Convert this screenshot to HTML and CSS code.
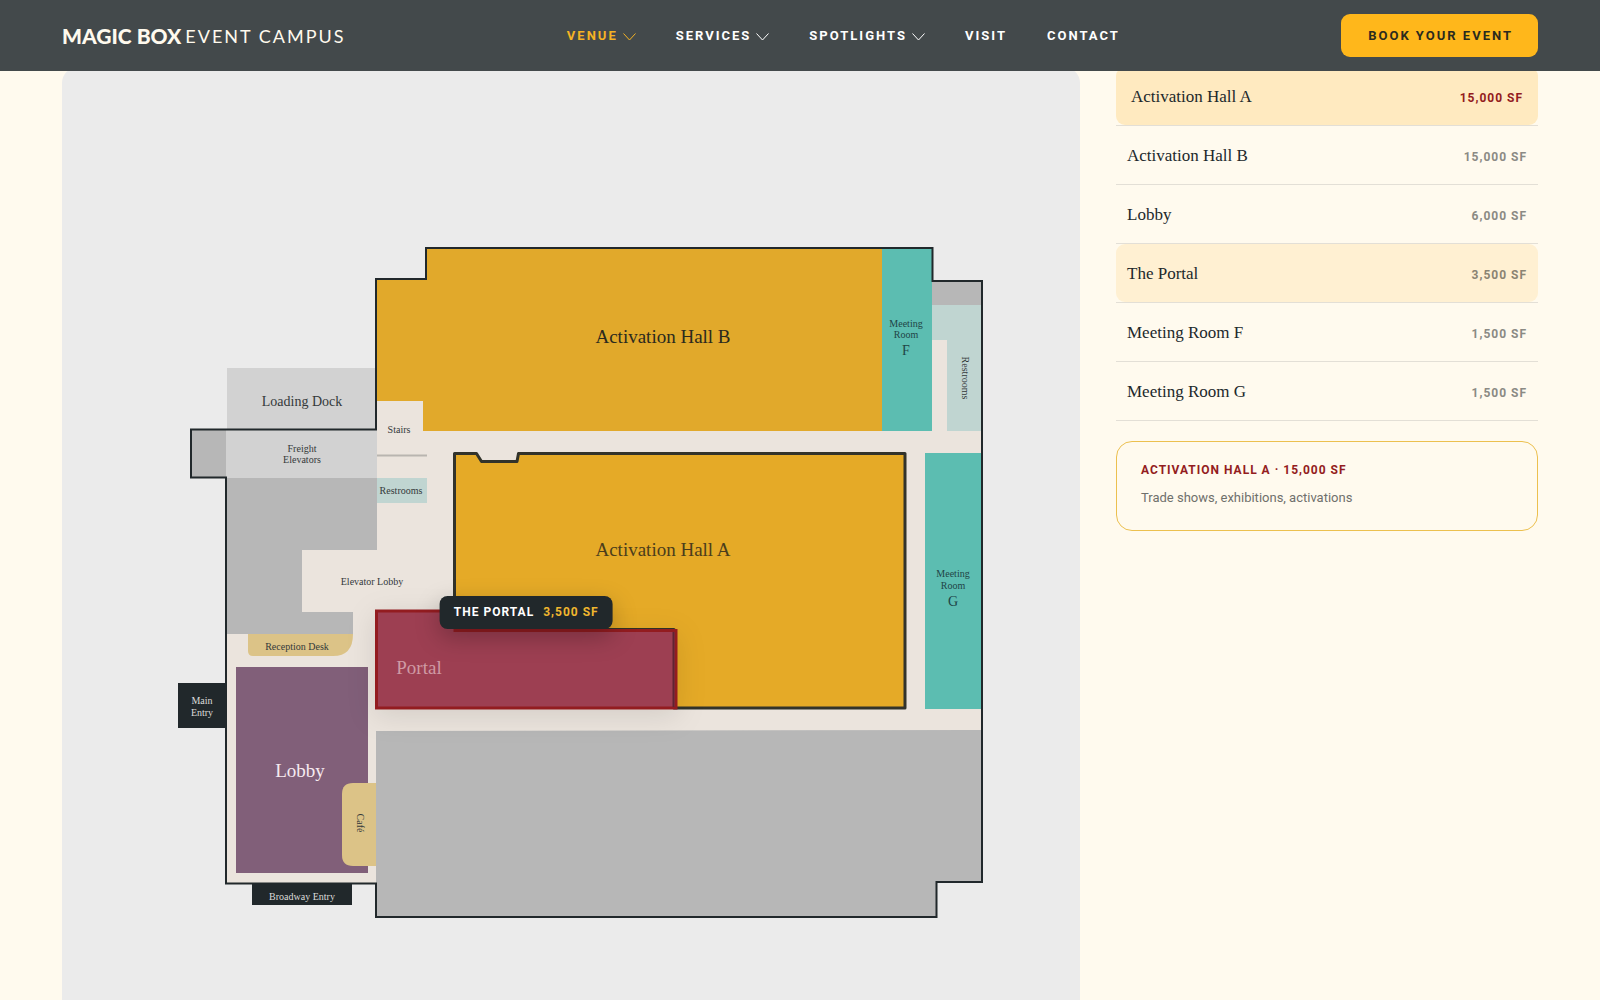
FILE: index.html
```html
<!DOCTYPE html>
<html lang="en">
<head>
<meta charset="utf-8">
<meta name="viewport" content="width=device-width, initial-scale=1">
<title>Magic Box Event Campus – Venue</title>
<link rel="stylesheet" href="styles.css">
</head>
<body>
<header class="site-header">
  <a class="logo" href="#"><span class="logo-bold">MAGIC BOX</span><span class="logo-light">EVENT CAMPUS</span></a>
  <nav class="nav" aria-label="Main">
    <a class="nav-link is-current" href="#">VENUE<svg class="chevron" viewBox="0 0 13 8" aria-hidden="true"><path d="M.5.5l6 6.5 6-6.5"/></svg></a>
    <a class="nav-link" href="#">SERVICES<svg class="chevron" viewBox="0 0 13 8" aria-hidden="true"><path d="M.5.5l6 6.5 6-6.5"/></svg></a>
    <a class="nav-link" href="#">SPOTLIGHTS<svg class="chevron" viewBox="0 0 13 8" aria-hidden="true"><path d="M.5.5l6 6.5 6-6.5"/></svg></a>
    <a class="nav-link" href="#">VISIT</a>
    <a class="nav-link" href="#">CONTACT</a>
  </nav>
  <button class="book" type="button">BOOK YOUR EVENT</button>
</header>

<main class="venue">
  <section class="plan" aria-label="Floor plan">
    <svg class="plan-map" viewBox="62 67 1018 933" role="img" aria-label="Ground floor">
      <path class="dock" d="M227 368H376V430H227z"/>
      <path class="floor" d="M426 248H932V281H982V882H936V917H376V883H226V477H191V430H376V279H426z"/>
      <path class="closed" d="M191 430H227V477H191z"/>
      <path class="dock" d="M226 430H377V478H226z"/>
      <path class="closed" d="M226 478H377V550H302V612H353V634H226z"/>
      <path class="closed" d="M376 731L982 730V882H936V917H376z"/>
      <path class="closed" d="M932 281H982V305H932z"/>
      <path class="restroom" d="M932 305H982V431H947V340H932z"/>
      <path class="restroom" d="M377 478H427V503H377z"/>
      <path class="divider" d="M377 455.5H427"/>
      <path class="hall-b" d="M376 279H426V248H882V431H423V401H376z"/>
      <path class="meeting" d="M882 248H932V431H882z"/>
      <path class="meeting" d="M925 453H982V709H925z"/>
      <path class="lobby" d="M236 667H368V873H236z"/>
      <path class="desk" d="M248 634H353Q353 656 333 656H253Q248 656 248 651z"/>
      <path class="desk" d="M376 783V866H353Q342 866 342 855V794Q342 783 353 783z"/>
      <path class="outline" d="M426 248H932.5V281H982V882H936.5V917H376V883.5H226V477.5H191V429.5H376V279H426z"/>
      <path class="entry" d="M178 683H226V728H178z"/>
      <path class="entry" d="M252 883H352V905H252z"/>
      <path class="hall-a" d="M454.5 453.5H476.5L481.5 461.5H517L518.5 453.5H905V708H674V629.5H454.5z"/>
      <path class="portal" d="M376.5 611H455V630.5H676V708H376.5z"/>
      <path class="portal-wall" d="M673.5 632V707"/>

      <text class="label label-room" x="663" y="343">Activation Hall B</text>
      <text class="label label-room label-active" x="663" y="556">Activation Hall A</text>
      <text class="label label-room label-portal" x="419" y="674">Portal</text>
      <text class="label label-room label-lobby" x="300" y="777">Lobby</text>
      <text class="label label-medium" x="302" y="406">Loading Dock</text>
      <text class="label" x="302" y="452">Freight</text>
      <text class="label" x="302" y="463">Elevators</text>
      <text class="label" x="399" y="433">Stairs</text>
      <text class="label" x="401" y="494">Restrooms</text>
      <text class="label" x="372" y="585">Elevator Lobby</text>
      <text class="label" x="297" y="650">Reception Desk</text>
      <text class="label label-entry" x="202" y="704">Main</text>
      <text class="label label-entry" x="202" y="716">Entry</text>
      <text class="label label-entry" x="302" y="900">Broadway Entry</text>
      <text class="label label-meeting" x="906" y="327">Meeting</text>
      <text class="label label-meeting" x="906" y="338">Room</text>
      <text class="label label-meeting label-medium" x="906" y="355">F</text>
      <text class="label label-meeting" x="953" y="577">Meeting</text>
      <text class="label label-meeting" x="953" y="589">Room</text>
      <text class="label label-meeting label-medium" x="953" y="606">G</text>
      <text class="label" transform="translate(962 378) rotate(90)">Restrooms</text>
      <text class="label" transform="translate(357 823) rotate(90)">Café</text>
    </svg>
    <div class="tooltip" role="tooltip"><span>THE PORTAL</span><span class="tooltip-size">3,500 SF</span></div>
  </section>

  <aside class="spaces">
    <ul class="space-list">
      <li><button class="space is-active" type="button"><span class="space-name">Activation Hall A</span><span class="space-size">15,000 SF</span></button></li>
      <li><button class="space" type="button"><span class="space-name">Activation Hall B</span><span class="space-size">15,000 SF</span></button></li>
      <li><button class="space" type="button"><span class="space-name">Lobby</span><span class="space-size">6,000 SF</span></button></li>
      <li><button class="space is-hovered" type="button"><span class="space-name">The Portal</span><span class="space-size">3,500 SF</span></button></li>
      <li><button class="space" type="button"><span class="space-name">Meeting Room F</span><span class="space-size">1,500 SF</span></button></li>
      <li><button class="space" type="button"><span class="space-name">Meeting Room G</span><span class="space-size">1,500 SF</span></button></li>
    </ul>
    <div class="detail">
      <h2 class="detail-title">ACTIVATION HALL A · 15,000 SF</h2>
      <p class="detail-text">Trade shows, exhibitions, activations</p>
    </div>
  </aside>
</main>
</body>
</html>
```

FILE: styles.css
```css
:root {
  --ink: #21282b;
  --cream: #fffaee;
  --gold: #ffb71b;
  --red: #931c20;
  --sans: Roboto, "Liberation Sans", sans-serif;
  --serif: "Liberation Serif", serif;
}

* { box-sizing: border-box; }

body {
  margin: 0;
  background: var(--cream);
  color: var(--ink);
  font-family: var(--sans);
}

button {
  border: 0;
  font: inherit;
  color: inherit;
  cursor: pointer;
}

/* Header */
.site-header {
  position: fixed;
  inset: 0 0 auto;
  z-index: 10;
  display: flex;
  align-items: center;
  justify-content: space-between;
  height: 71px;
  padding: 0 62px;
  background: #43494b;
}

.logo {
  display: flex;
  align-items: center;
  gap: 4px;
  color: var(--cream);
  font-family: Lato, sans-serif;
  text-decoration: none;
  white-space: nowrap;
}

.logo-bold { font-size: 21px; font-weight: 900; }
.logo-light { font-size: 18px; letter-spacing: 2px; }

.nav { display: flex; gap: 40px; }

.nav-link {
  display: flex;
  align-items: center;
  gap: 5px;
  color: #fff;
  font-size: 13px;
  font-weight: 700;
  letter-spacing: 2px;
  text-decoration: none;
}

.nav-link.is-current { color: #f5b324; }

.chevron {
  width: 13px;
  height: 8px;
  margin-top: 2px;
  fill: none;
  stroke: currentColor;
}

.book {
  height: 43px;
  padding: 0 25px 0 27px;
  border-radius: 9px;
  background: var(--gold);
  color: #2b2a1e;
  font-size: 13px;
  font-weight: 700;
  letter-spacing: 2px;
}

/* Page body */
.venue {
  display: grid;
  grid-template-columns: minmax(0, 1fr) 422px;
  gap: 36px;
  padding: 67px 62px 0;
}

/* Floor plan */
.plan {
  position: relative;
  border-radius: 16px 16px 0 0;
  background: #ebebeb;
}

.plan-map { display: block; width: 100%; }

.floor { fill: #ebe4dd; }
.closed { fill: #b7b7b7; }
.dock { fill: #d2d2d2; }
.restroom { fill: #c0d5d1; }
.meeting { fill: #5cbdb1; }
.lobby { fill: #815f79; }
.desk { fill: #dcc387; }
.entry { fill: var(--ink); }
.divider { stroke: #b9b5b0; stroke-width: 2; }
.outline { fill: none; stroke: var(--ink); stroke-width: 2; }
.hall-b { fill: #e1a92b; }
.hall-a { fill: #e5aa27; stroke: #32332b; stroke-width: 3; stroke-linejoin: round; }

.portal {
  fill: #9d3f52;
  stroke: var(--red);
  stroke-width: 3;
  filter: drop-shadow(0 6px 14px rgb(0 0 0 / 10%));
}

.portal-wall { stroke: #5f2432; stroke-width: 2; }

.label {
  fill: #34393a;
  font-family: var(--serif);
  font-size: 10px;
  text-anchor: middle;
}

.label-medium { font-size: 14px; }
.label-room { font-size: 19px; fill: #2b2a1e; }
.label-active { fill: #4b3d1c; }
.label-portal { fill: #cf9aa4; }
.label-lobby { fill: #f6eaf0; }
.label-entry { fill: #dcdcda; }
.label-meeting { fill: #1f4446; }

.tooltip {
  position: absolute;
  left: 45.6%;
  top: 56.7%;
  display: flex;
  gap: 9px;
  padding: 0 14px;
  border-radius: 8px;
  background: var(--ink);
  box-shadow: 0 8px 24px rgb(0 0 0 / 25%);
  color: #fff;
  font-size: 12px;
  font-weight: 700;
  letter-spacing: 1px;
  line-height: 33px;
  white-space: nowrap;
  transform: translateX(-50%);
}

.tooltip-size { color: #f0b72f; }

/* Space list */
.space-list {
  margin: 0;
  padding: 0;
  list-style: none;
}

.space-list li { border-bottom: 1px solid #e3dfd6; }

.space {
  display: flex;
  align-items: baseline;
  justify-content: space-between;
  width: 100%;
  height: 58px;
  padding: 0 11px;
  border-radius: 9px;
  background: none;
  line-height: 60px;
}

.space.is-active { padding: 0 15px; background: #ffeac0; }
.space.is-hovered { background: #fff0d2; }

.space-name { font-family: var(--serif); font-size: 17px; }

.space-size {
  color: #8b8a84;
  font-size: 12px;
  font-weight: 700;
  letter-spacing: 1px;
}

.is-active .space-size { color: var(--red); }
.is-hovered .space-size { color: #8b8473; }

.detail {
  margin-top: 20px;
  padding: 20px 24px;
  border: 1px solid #ecc04f;
  border-radius: 16px;
}

.detail-title {
  margin: 0 0 8px;
  color: var(--red);
  font-size: 12px;
  letter-spacing: 1px;
  line-height: 16px;
}

.detail-text {
  margin: 0;
  color: #6f706c;
  font-size: 13px;
  line-height: 24px;
}
```
